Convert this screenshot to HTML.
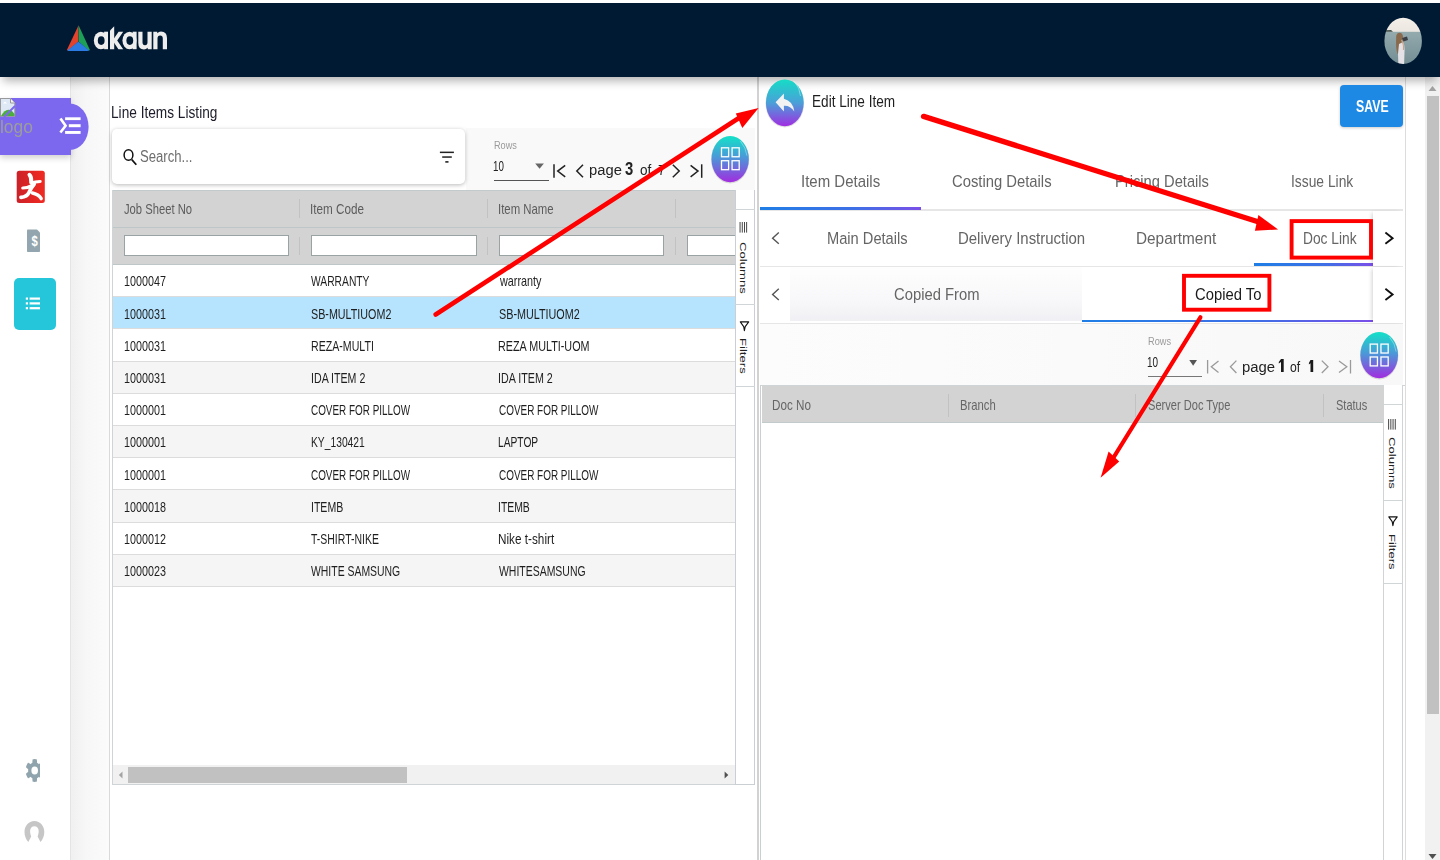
<!DOCTYPE html>
<html><head><meta charset="utf-8"><style>
html,body{margin:0;padding:0;width:1440px;height:860px;overflow:hidden;background:#fff}
body{position:relative;font-family:"Liberation Sans",sans-serif}
.t{position:absolute;white-space:nowrap;transform-origin:0 0}
</style></head><body>
<div style="position:absolute;left:0.00px;top:3.00px;width:1440.00px;height:74.00px;background:#001a33;box-shadow:0 7px 9px -3px rgba(0,0,0,.30);z-index:5"></div>
<svg style="position:absolute;left:60.00px;top:20.00px;width:40.00px;height:36.00px;overflow:visible;z-index:6" viewBox="60 20 40 36" preserveAspectRatio="none">
<path d="M78.6 25.2 L67.2 49.2 Q66.6 50.6 68.2 50.4 L78.4 41.6 Z" fill="#e3432c"/>
<path d="M78.6 25.2 L89.6 49.2 Q90.2 50.6 88.6 50.4 L78.6 41.6 Z" fill="#1d9f58"/>
<path d="M67.6 50.2 L78.4 41.4 L89.0 50.2 Q88.6 50.9 87.6 50.9 L68.6 50.9 Q67.4 50.9 67.6 50.2 Z" fill="#2b7be3"/>
</svg>
<svg style="position:absolute;left:90.00px;top:22.00px;width:80.00px;height:32.00px;overflow:visible;z-index:6" viewBox="90 22 80 32" preserveAspectRatio="none">
<g fill="#ededed">
<ellipse cx="100.9" cy="40.45" rx="7.05" ry="8.8"/><rect x="104.1" y="31.7" width="3.9" height="17.5"/>
<ellipse cx="129.5" cy="40.45" rx="7.05" ry="8.8"/><rect x="132.7" y="31.7" width="3.9" height="17.5"/>
<path d="M110 30.6 L114.2 26.2 L114.2 49.2 L110 49.2 Z"/>
<path d="M118.6 31.7 L123.2 31.7 L117.2 40.4 L123.2 49.2 L118.4 49.2 L112.6 40.4 Z"/>
<path d="M138.3 31.7 L142.5 31.7 L142.5 42.3 Q142.5 45.3 145 45.3 Q147.5 45.3 147.5 42.3 L147.5 31.7 L151.7 31.7 L151.7 49.2 L147.8 49.2 L147.6 47.7 Q146.2 49.5 144 49.5 Q138.3 49.5 138.3 43 Z"/>
<path d="M153.3 49.2 L157.5 49.2 L157.5 38.6 Q157.5 35.6 160.15 35.6 Q162.8 35.6 162.8 38.6 L162.8 49.2 L167 49.2 L167 38 Q167 31.4 161 31.4 Q158.8 31.4 157.4 33.2 L157.2 31.7 L153.3 31.7 Z"/>
</g>
<g fill="#001a33"><ellipse cx="101.2" cy="40.6" rx="3.4" ry="4.3"/><ellipse cx="129.8" cy="40.6" rx="3.4" ry="4.3"/></g>
</svg>
<svg style="position:absolute;left:1380.00px;top:14.00px;width:46.00px;height:54.00px;overflow:visible;z-index:6" viewBox="1380 14 46 54" preserveAspectRatio="none">
<defs><clipPath id="av"><ellipse cx="1403.15" cy="40.9" rx="18.75" ry="23.2"/></clipPath>
<linearGradient id="sea" x1="0" y1="0" x2="0" y2="1"><stop offset="0" stop-color="#a9bcbe"/><stop offset=".5" stop-color="#8aa2a6"/><stop offset="1" stop-color="#6f8a90"/></linearGradient>
<linearGradient id="sky" x1="0" y1="0" x2="0" y2="1"><stop offset="0" stop-color="#f6f2ec"/><stop offset="1" stop-color="#ebe6df"/></linearGradient>
<filter id="bl" x="-10%" y="-10%" width="120%" height="120%"><feGaussianBlur stdDeviation="0.45"/></filter></defs>
<g clip-path="url(#av)"><g filter="url(#bl)">
<rect x="1380" y="14" width="46" height="54" fill="url(#sea)"/>
<rect x="1380" y="14" width="46" height="17.8" fill="url(#sky)"/>
<path d="M1384 31.8 L1386 30.2 L1391 30 L1393 31.8 Z" fill="#3f4e48"/>
<path d="M1396.2 36 Q1397 32.5 1400 32.8 Q1403 33.5 1403 37 L1402.5 44 L1401 52 L1397.5 54 Q1395.5 48 1396.2 36 Z" fill="#8a6a4e"/>
<path d="M1399 44 L1403 42 Q1405 45 1404.5 52 L1404 68 L1398.5 68 L1398 54 Z" fill="#e4e2e6"/>
<path d="M1402 38 L1407 36.5 L1408 40 L1403.5 41.5 Z" fill="#3a3f44"/>
<path d="M1401.5 40 Q1404 44 1403.5 50" fill="none" stroke="#c9a58a" stroke-width="1.2"/>
</g></g></svg>
<div style="position:absolute;left:70.00px;top:77.00px;width:39.50px;height:783.00px;background:linear-gradient(to right,#f0f0f0,#f7f7f7 40%,#fbfbfb);border-left:1px solid #e4e4e4;border-right:1px solid #dadada;box-sizing:border-box"></div>
<div style="position:absolute;left:0.00px;top:98.00px;width:70.50px;height:57.00px;background:#7b68ee;box-shadow:0 3px 6px rgba(0,0,0,.18)"></div>
<svg style="position:absolute;left:40.00px;top:95.00px;width:60.00px;height:65.00px;overflow:visible;" viewBox="40 95 60 65" preserveAspectRatio="none"><ellipse cx="69.8" cy="126.8" rx="18.8" ry="23.3" fill="#7b68ee"/></svg>
<svg style="position:absolute;left:0.00px;top:98.00px;width:16.00px;height:19.00px;overflow:visible;" viewBox="0 98 16 19" preserveAspectRatio="none">
<path d="M0.5 98.5 L10.5 98.5 L14.8 103 L14.8 116.3 L0.5 116.3 Z" fill="#dfe8f5" stroke="#9a9a9a" stroke-width="1"/>
<path d="M10.5 98.5 L10.5 103 L14.8 103" fill="#f4f4f4" stroke="#9a9a9a" stroke-width="1"/>
<path d="M1 116 Q6 107 12 111 L14.5 114 L14.5 116 Z" fill="#4caf3c"/>
<path d="M3 103.5 L5 101.5 L7 103.5 Z" fill="#fff"/>
<path d="M4 117 L15 106" stroke="#7b68ee" stroke-width="2"/>
</svg>
<svg style="position:absolute;left:58.00px;top:114.00px;width:26.00px;height:23.00px;overflow:visible;" viewBox="58 114 26 23" preserveAspectRatio="none">
<path d="M61.2 119.6 L65.6 125.7 L61.2 131.4" fill="none" stroke="#fff" stroke-width="2.6" stroke-linecap="square"/>
<rect x="65.1" y="117.3" width="15.5" height="2.8" fill="#fff"/>
<rect x="68.8" y="124.2" width="11.8" height="3" fill="#fff"/>
<rect x="65.1" y="131" width="15.5" height="2.9" fill="#fff"/>
</svg>
<svg style="position:absolute;left:16.00px;top:170.00px;width:30.00px;height:34.00px;overflow:visible;" viewBox="16 170 30 34" preserveAspectRatio="none">
<defs><linearGradient id="rg" x1="0" x2="1"><stop offset="0" stop-color="#c9232a"/><stop offset=".5" stop-color="#e02424"/><stop offset="1" stop-color="#ef2b22"/></linearGradient></defs>
<rect x="16.7" y="170.8" width="28.1" height="32.1" rx="2.5" fill="url(#rg)"/>
<g fill="none" stroke="#fff" stroke-linecap="round" stroke-linejoin="round">
<path d="M29.5 174.8 Q31.6 177 31.2 182" stroke-width="4"/>
<path d="M31 183 Q35 181.6 40.2 181.4" stroke-width="3"/>
<path d="M22.8 188 Q28 188 33.5 185" stroke-width="3.2"/>
<path d="M34.2 184 Q30.5 188.5 29 192.5 Q27 196.8 21 197.4" stroke-width="3.8"/>
<path d="M32.4 193 Q38.5 194.2 41.2 198.6" stroke-width="3.4"/>
</g>
</svg>
<svg style="position:absolute;left:26.00px;top:228.00px;width:15.00px;height:25.00px;overflow:visible;" viewBox="26 228 15 25" preserveAspectRatio="none">
<path d="M27.8 229.5 L37 229.5 L40 232.5 L40 251.2 Q40 252 39.2 252 L27.8 252 Q27 252 27 251.2 L27 230.3 Q27 229.5 27.8 229.5 Z" fill="#93a5ae"/>
<text transform="translate(34.6 246.4) scale(0.82 1)" x="0" y="0" font-family="Liberation Sans" font-weight="700" font-size="13.8" fill="#fff" text-anchor="middle">$</text>
</svg>
<div style="position:absolute;left:14.00px;top:277.70px;width:42.20px;height:52.50px;background:#26c6da;border-radius:5px"></div>
<svg style="position:absolute;left:25.00px;top:296.00px;width:16.00px;height:15.00px;overflow:visible;" viewBox="25 296 16 15" preserveAspectRatio="none">
<rect x="25.8" y="297.5" width="2.2" height="2.2" fill="#fff"/>
<rect x="25.8" y="302.3" width="2.2" height="2.2" fill="#fff"/>
<rect x="25.8" y="307.1" width="2.2" height="2.2" fill="#fff"/>
<rect x="29.6" y="297.5" width="10.4" height="2.2" fill="#fff"/>
<rect x="29.6" y="302.3" width="10.4" height="2.2" fill="#fff"/>
<rect x="29.6" y="307.1" width="10.4" height="2.2" fill="#fff"/>
</svg>
<svg style="position:absolute;left:24.00px;top:757.00px;width:18.00px;height:27.00px;overflow:visible;" viewBox="24 757 18 27" preserveAspectRatio="none">
<path fill="#90a4ae" fill-rule="evenodd" d="M40.00 770.50 L40.00 770.36 L40.00 770.21 L40.00 770.07 L40.00 769.93 L40.00 769.79 L40.00 769.64 L40.00 769.50 L40.00 769.36 L40.00 769.22 L40.00 769.01 L40.00 768.78 L40.00 768.55 L40.00 768.30 L40.00 768.03 L40.00 767.76 L40.00 767.47 L40.00 767.17 L40.00 766.98 L40.00 766.79 L40.00 766.60 L40.00 766.41 L40.00 766.23 L40.00 766.05 L40.00 765.86 L40.00 765.68 L40.00 765.50 L40.00 765.32 L40.00 765.15 L40.00 764.97 L40.00 764.80 L40.00 764.63 L40.00 764.46 L40.00 764.29 L40.00 764.13 L40.00 763.96 L40.00 763.80 L40.00 763.64 L40.00 763.48 L40.00 763.33 L40.00 763.17 L40.00 763.02 L40.00 762.87 L40.00 762.73 L40.00 762.86 L40.00 763.00 L40.00 763.16 L40.00 763.33 L39.73 763.51 L39.42 763.71 L39.12 763.91 L38.83 764.13 L38.74 764.04 L38.65 763.95 L38.56 763.87 L38.46 763.78 L38.37 763.70 L38.27 763.62 L38.18 763.55 L38.08 763.47 L37.98 763.40 L37.88 763.33 L37.78 763.26 L37.68 763.19 L37.58 763.13 L37.47 763.07 L37.37 763.01 L37.26 762.95 L37.16 762.90 L37.05 762.84 L37.05 762.42 L37.04 761.99 L37.02 761.56 L36.99 761.13 L36.95 760.70 L36.89 760.26 L36.83 759.83 L36.75 759.39 L36.60 759.35 L36.44 759.31 L36.28 759.27 L36.13 759.24 L35.97 759.21 L35.81 759.18 L35.65 759.16 L35.49 759.14 L35.34 759.13 L35.18 759.12 L35.02 759.11 L34.86 759.10 L34.70 759.10 L34.54 759.10 L34.38 759.11 L34.22 759.12 L34.06 759.13 L33.91 759.14 L33.75 759.16 L33.59 759.18 L33.43 759.21 L33.27 759.24 L33.12 759.27 L32.96 759.31 L32.80 759.35 L32.65 759.39 L32.57 759.83 L32.51 760.26 L32.45 760.70 L32.41 761.13 L32.38 761.56 L32.36 761.99 L32.35 762.42 L32.35 762.84 L32.24 762.90 L32.14 762.95 L32.03 763.01 L31.93 763.07 L31.82 763.13 L31.72 763.19 L31.62 763.26 L31.52 763.33 L31.42 763.40 L31.32 763.47 L31.22 763.55 L31.13 763.62 L31.03 763.70 L30.94 763.78 L30.84 763.87 L30.75 763.95 L30.66 764.04 L30.57 764.13 L30.28 763.91 L29.98 763.71 L29.67 763.51 L29.35 763.33 L29.03 763.16 L28.70 763.00 L28.37 762.86 L28.03 762.73 L27.92 762.87 L27.82 763.02 L27.71 763.17 L27.61 763.33 L27.51 763.48 L27.42 763.64 L27.32 763.80 L27.23 763.96 L27.14 764.13 L27.05 764.29 L26.97 764.46 L26.88 764.63 L26.80 764.80 L26.72 764.97 L26.65 765.15 L26.57 765.32 L26.50 765.50 L26.43 765.68 L26.37 765.86 L26.30 766.05 L26.24 766.23 L26.19 766.41 L26.13 766.60 L26.08 766.79 L26.03 766.98 L25.98 767.17 L26.24 767.47 L26.51 767.76 L26.78 768.03 L27.06 768.30 L27.34 768.55 L27.63 768.78 L27.92 769.01 L28.22 769.22 L28.20 769.36 L28.19 769.50 L28.18 769.64 L28.16 769.79 L28.16 769.93 L28.15 770.07 L28.14 770.21 L28.14 770.36 L28.14 770.50 L28.14 770.64 L28.14 770.79 L28.15 770.93 L28.16 771.07 L28.16 771.21 L28.18 771.36 L28.19 771.50 L28.20 771.64 L28.22 771.78 L27.92 771.99 L27.63 772.22 L27.34 772.45 L27.06 772.70 L26.78 772.97 L26.51 773.24 L26.24 773.53 L25.98 773.83 L26.03 774.02 L26.08 774.21 L26.13 774.40 L26.19 774.59 L26.24 774.77 L26.30 774.95 L26.37 775.14 L26.43 775.32 L26.50 775.50 L26.57 775.68 L26.65 775.85 L26.72 776.03 L26.80 776.20 L26.88 776.37 L26.97 776.54 L27.05 776.71 L27.14 776.87 L27.23 777.04 L27.32 777.20 L27.42 777.36 L27.51 777.52 L27.61 777.67 L27.71 777.83 L27.82 777.98 L27.92 778.13 L28.03 778.27 L28.37 778.14 L28.70 778.00 L29.03 777.84 L29.35 777.67 L29.67 777.49 L29.98 777.29 L30.28 777.09 L30.57 776.87 L30.66 776.96 L30.75 777.05 L30.84 777.13 L30.94 777.22 L31.03 777.30 L31.13 777.38 L31.22 777.45 L31.32 777.53 L31.42 777.60 L31.52 777.67 L31.62 777.74 L31.72 777.81 L31.82 777.87 L31.93 777.93 L32.03 777.99 L32.14 778.05 L32.24 778.10 L32.35 778.16 L32.35 778.58 L32.36 779.01 L32.38 779.44 L32.41 779.87 L32.45 780.30 L32.51 780.74 L32.57 781.17 L32.65 781.61 L32.80 781.65 L32.96 781.69 L33.12 781.73 L33.27 781.76 L33.43 781.79 L33.59 781.82 L33.75 781.84 L33.91 781.86 L34.06 781.87 L34.22 781.88 L34.38 781.89 L34.54 781.90 L34.70 781.90 L34.86 781.90 L35.02 781.89 L35.18 781.88 L35.34 781.87 L35.49 781.86 L35.65 781.84 L35.81 781.82 L35.97 781.79 L36.13 781.76 L36.28 781.73 L36.44 781.69 L36.60 781.65 L36.75 781.61 L36.83 781.17 L36.89 780.74 L36.95 780.30 L36.99 779.87 L37.02 779.44 L37.04 779.01 L37.05 778.58 L37.05 778.16 L37.16 778.10 L37.26 778.05 L37.37 777.99 L37.47 777.93 L37.58 777.87 L37.68 777.81 L37.78 777.74 L37.88 777.67 L37.98 777.60 L38.08 777.53 L38.18 777.45 L38.27 777.38 L38.37 777.30 L38.46 777.22 L38.56 777.13 L38.65 777.05 L38.74 776.96 L38.83 776.87 L39.12 777.09 L39.42 777.29 L39.73 777.49 L40.00 777.67 L40.00 777.84 L40.00 778.00 L40.00 778.14 L40.00 778.27 L40.00 778.13 L40.00 777.98 L40.00 777.83 L40.00 777.67 L40.00 777.52 L40.00 777.36 L40.00 777.20 L40.00 777.04 L40.00 776.87 L40.00 776.71 L40.00 776.54 L40.00 776.37 L40.00 776.20 L40.00 776.03 L40.00 775.85 L40.00 775.68 L40.00 775.50 L40.00 775.32 L40.00 775.14 L40.00 774.95 L40.00 774.77 L40.00 774.59 L40.00 774.40 L40.00 774.21 L40.00 774.02 L40.00 773.83 L40.00 773.53 L40.00 773.24 L40.00 772.97 L40.00 772.70 L40.00 772.45 L40.00 772.22 L40.00 771.99 L40.00 771.78 L40.00 771.64 L40.00 771.50 L40.00 771.36 L40.00 771.21 L40.00 771.07 L40.00 770.93 L40.00 770.79 L40.00 770.64 Z M38.00 770.5 A3.3 4 0 1 0 31.40 770.5 A3.3 4 0 1 0 38.00 770.5 Z"/>
</svg>
<svg style="position:absolute;left:23.00px;top:819.00px;width:23.00px;height:25.00px;overflow:visible;" viewBox="23 819 23 25" preserveAspectRatio="none">
<path fill="#c6c6c6" d="M34.4 821 C28.5 821 24.5 826 24.5 832 C24.5 836 26 839.5 28.3 842 L31.2 836.5 C30.4 834.5 30.1 832.5 30.1 831 C30.1 828 32 826.2 34.4 826.2 C36.8 826.2 38.7 828 38.7 831 C38.7 832.5 38.4 834.5 37.6 836.5 L40.5 842 C42.8 839.5 44.3 836 44.3 832 C44.3 826 40.3 821 34.4 821 Z"/>
</svg>
<div style="position:absolute;left:466.00px;top:128.00px;width:289.00px;height:61.60px;background:#f9f9f9"></div>
<div style="position:absolute;left:112.20px;top:128.70px;width:353.00px;height:55.30px;background:#fff;border-radius:5px;box-shadow:0 1px 4px rgba(0,0,0,.28)"></div>
<svg style="position:absolute;left:120.00px;top:146.00px;width:20.00px;height:22.00px;overflow:visible;" viewBox="120 146 20 22" preserveAspectRatio="none">
<ellipse cx="128.5" cy="155" rx="4.4" ry="5.3" fill="none" stroke="#111" stroke-width="1.5"/>
<path d="M131.8 159.6 L136.3 164.8" stroke="#111" stroke-width="1.7"/>
</svg>
<svg style="position:absolute;left:438.00px;top:150.00px;width:18.00px;height:15.00px;overflow:visible;" viewBox="438 150 18 15" preserveAspectRatio="none">
<rect x="439.9" y="151.6" width="14" height="1.5" fill="#222"/>
<rect x="442.2" y="156.3" width="9.6" height="1.5" fill="#222"/>
<rect x="445.3" y="161.1" width="3.2" height="1.6" fill="#222"/>
</svg>
<svg style="position:absolute;left:533.00px;top:161.00px;width:13.00px;height:9.00px;overflow:visible;" viewBox="533 161 13 9" preserveAspectRatio="none"><path d="M535.2 163.4 L543.9 163.4 L539.55 168.7 Z" fill="#666"/></svg>
<div style="position:absolute;left:494.00px;top:180.00px;width:54.50px;height:1.20px;background:#555"></div>
<svg style="position:absolute;left:550.00px;top:160.00px;width:160.00px;height:22.00px;overflow:visible;" viewBox="550 160 160 22" preserveAspectRatio="none"><path d="M554.0 164.3 L554.0 177.8" stroke="#222" stroke-width="1.5"/><path d="M565.2 165.3 L557.7 171.05 L565.2 176.8" fill="none" stroke="#222" stroke-width="1.5"/><path d="M583 164.8 L576.8 171.05 L583 177.3" fill="none" stroke="#222" stroke-width="1.5"/><path d="M672.8 164.8 L679.2 171.05 L672.8 177.3" fill="none" stroke="#222" stroke-width="1.5"/><path d="M701.7 164.3 L701.7 177.8" stroke="#222" stroke-width="1.5"/><path d="M690.6 165.3 L698.0 171.05 L690.6 176.8" fill="none" stroke="#222" stroke-width="1.5"/></svg>
<svg style="position:absolute;left:705.00px;top:130.00px;width:50.00px;height:58.00px;overflow:visible;" viewBox="705 130 50 58" preserveAspectRatio="none"><defs><linearGradient id="g711" x1="0" y1="0" x2="0" y2="1"><stop offset="0" stop-color="#12e2c8"/><stop offset=".45" stop-color="#4a9ad8"/><stop offset="1" stop-color="#a22ce0"/></linearGradient></defs>
<ellipse cx="730.15" cy="159.75" rx="19.049999999999976" ry="23.750000000000007" fill="rgba(0,0,0,.12)"/>
<ellipse cx="730.15" cy="159.15" rx="18.649999999999977" ry="23.150000000000006" fill="url(#g711)"/>
<path d="M740.4074999999999 141.093 Q746.0024999999999 147.575 746.935 155.6775" fill="none" stroke="rgba(255,255,255,.45)" stroke-width="0.8"/>
<rect x="721.5" y="147.79999999999998" width="7.11599999999999" height="8.964000000000011" fill="none" stroke="#fff" stroke-width="1.3"/><rect x="732.084" y="147.79999999999998" width="7.11599999999999" height="8.964000000000011" fill="none" stroke="#fff" stroke-width="1.3"/><rect x="721.5" y="160.736" width="7.11599999999999" height="8.964000000000011" fill="none" stroke="#fff" stroke-width="1.3"/><rect x="732.084" y="160.736" width="7.11599999999999" height="8.964000000000011" fill="none" stroke="#fff" stroke-width="1.3"/></svg>
<div style="position:absolute;left:112.00px;top:189.60px;width:643.00px;height:595.40px;background:#fff;border:1px solid #cfd4d6;box-sizing:border-box"></div>
<div style="position:absolute;left:113.00px;top:190.00px;width:622.00px;height:74.50px;background:#d3d3d3;border-top:1px solid #c3cacc;box-sizing:border-box"></div>
<div style="position:absolute;left:113.00px;top:226.50px;width:622.00px;height:1.00px;background:#bfc6c8"></div>
<div style="position:absolute;left:113.00px;top:264.00px;width:622.00px;height:1.00px;background:#bfc6c8"></div>
<div style="position:absolute;left:298.80px;top:199.00px;width:1.00px;height:19.00px;background:#c2c2c2"></div>
<div style="position:absolute;left:298.80px;top:237.00px;width:1.00px;height:18.00px;background:#c2c2c2"></div>
<div style="position:absolute;left:486.60px;top:199.00px;width:1.00px;height:19.00px;background:#c2c2c2"></div>
<div style="position:absolute;left:486.60px;top:237.00px;width:1.00px;height:18.00px;background:#c2c2c2"></div>
<div style="position:absolute;left:674.60px;top:199.00px;width:1.00px;height:19.00px;background:#c2c2c2"></div>
<div style="position:absolute;left:674.60px;top:237.00px;width:1.00px;height:18.00px;background:#c2c2c2"></div>
<div style="position:absolute;left:124.10px;top:235.40px;width:164.50px;height:20.20px;background:#fff;border:1px solid #9aa3a3;box-sizing:border-box"></div>
<div style="position:absolute;left:311.30px;top:235.40px;width:165.30px;height:20.20px;background:#fff;border:1px solid #9aa3a3;box-sizing:border-box"></div>
<div style="position:absolute;left:499.00px;top:235.40px;width:165.30px;height:20.20px;background:#fff;border:1px solid #9aa3a3;box-sizing:border-box"></div>
<div style="position:absolute;left:686.90px;top:235.40px;width:48.10px;height:20.20px;background:#fff;border:1px solid #9aa3a3;box-sizing:border-box;border-right:none"></div>
<div style="position:absolute;left:113.00px;top:265.00px;width:622.00px;height:31.71px;background:#fff"></div>
<div style="position:absolute;left:113.00px;top:296.21px;width:622.00px;height:1.00px;background:#dcdcdc"></div>
<div style="position:absolute;left:113.00px;top:297.21px;width:622.00px;height:31.71px;background:#b6e4fe"></div>
<div style="position:absolute;left:113.00px;top:328.42px;width:622.00px;height:1.00px;background:#dcdcdc"></div>
<div style="position:absolute;left:113.00px;top:329.42px;width:622.00px;height:31.71px;background:#fff"></div>
<div style="position:absolute;left:113.00px;top:360.63px;width:622.00px;height:1.00px;background:#dcdcdc"></div>
<div style="position:absolute;left:113.00px;top:361.63px;width:622.00px;height:31.71px;background:#f5f5f5"></div>
<div style="position:absolute;left:113.00px;top:392.84px;width:622.00px;height:1.00px;background:#dcdcdc"></div>
<div style="position:absolute;left:113.00px;top:393.84px;width:622.00px;height:31.71px;background:#fff"></div>
<div style="position:absolute;left:113.00px;top:425.05px;width:622.00px;height:1.00px;background:#dcdcdc"></div>
<div style="position:absolute;left:113.00px;top:426.05px;width:622.00px;height:31.71px;background:#f5f5f5"></div>
<div style="position:absolute;left:113.00px;top:457.26px;width:622.00px;height:1.00px;background:#dcdcdc"></div>
<div style="position:absolute;left:113.00px;top:458.26px;width:622.00px;height:31.71px;background:#fff"></div>
<div style="position:absolute;left:113.00px;top:489.47px;width:622.00px;height:1.00px;background:#dcdcdc"></div>
<div style="position:absolute;left:113.00px;top:490.47px;width:622.00px;height:31.71px;background:#f5f5f5"></div>
<div style="position:absolute;left:113.00px;top:521.68px;width:622.00px;height:1.00px;background:#dcdcdc"></div>
<div style="position:absolute;left:113.00px;top:522.68px;width:622.00px;height:31.71px;background:#fff"></div>
<div style="position:absolute;left:113.00px;top:553.89px;width:622.00px;height:1.00px;background:#dcdcdc"></div>
<div style="position:absolute;left:113.00px;top:554.89px;width:622.00px;height:31.71px;background:#f5f5f5"></div>
<div style="position:absolute;left:113.00px;top:586.10px;width:622.00px;height:1.00px;background:#dcdcdc"></div>
<div style="position:absolute;left:734.50px;top:189.60px;width:20.50px;height:595.90px;background:#fff;border:1px solid #c9cfd3;border-top:none;box-sizing:border-box"></div>
<div style="position:absolute;left:735.00px;top:208.80px;width:20.00px;height:1.00px;background:#d0d5d7"></div>
<div style="position:absolute;left:735.00px;top:304.20px;width:20.00px;height:1.00px;background:#d0d5d7"></div>
<div style="position:absolute;left:735.00px;top:385.50px;width:20.00px;height:1.00px;background:#d0d5d7"></div>
<svg style="position:absolute;left:737.00px;top:220.00px;width:15.00px;height:14.00px;overflow:visible;" viewBox="737 220 15 14" preserveAspectRatio="none"><rect x="739.6" y="222" width="0.9" height="10.6" fill="#333"/><rect x="741.8000000000001" y="222" width="0.9" height="10.6" fill="#333"/><rect x="744.0" y="222" width="0.9" height="10.6" fill="#333"/><rect x="746.2" y="222" width="0.9" height="10.6" fill="#333"/></svg>
<svg style="position:absolute;left:737.00px;top:318.00px;width:15.00px;height:15.00px;overflow:visible;" viewBox="737 318 15 15" preserveAspectRatio="none"><path transform="translate(0 0)" d="M740.3 321.9 L748.7 321.9 L745.2 326.6 L744.4 330.6 L743.7 326.6 Z" fill="none" stroke="#111" stroke-width="1.1" stroke-linejoin="round"/></svg>
<div style="position:absolute;left:113.00px;top:765.30px;width:622.00px;height:18.70px;background:#f1f1f1"></div>
<div style="position:absolute;left:128.30px;top:767.40px;width:279.00px;height:15.30px;background:#c1c1c1"></div>
<svg style="position:absolute;left:116.00px;top:770.00px;width:8.00px;height:10.00px;overflow:visible;" viewBox="116 770 8 10" preserveAspectRatio="none"><path d="M122.5 771.5 L118.8 775 L122.5 778.5 Z" fill="#a3a3a3"/></svg>
<svg style="position:absolute;left:722.00px;top:770.00px;width:10.00px;height:10.00px;overflow:visible;" viewBox="722 770 10 10" preserveAspectRatio="none"><path d="M724.6 771.5 L728.3 775 L724.6 778.5 Z" fill="#505050"/></svg>
<div style="position:absolute;left:756.90px;top:77.00px;width:2.10px;height:783.00px;background:#d2d2d2"></div>
<div style="position:absolute;left:1405.00px;top:77.00px;width:1.00px;height:783.00px;background:#dcdcdc"></div>
<svg style="position:absolute;left:760.00px;top:74.00px;width:50.00px;height:58.00px;overflow:visible;z-index:6" viewBox="760 74 50 58" preserveAspectRatio="none">
<defs><linearGradient id="bk" x1="0" y1="0" x2="0" y2="1"><stop offset="0" stop-color="#16dcc6"/><stop offset=".5" stop-color="#4aa0d8"/><stop offset="1" stop-color="#a02ee2"/></linearGradient></defs>
<ellipse cx="784.8" cy="103.6" rx="19.3" ry="23.8" fill="rgba(0,0,0,.12)"/>
<ellipse cx="784.8" cy="102.85" rx="18.9" ry="23.35" fill="url(#bk)"/>
<path d="M794 81 Q800 88 800.5 96" fill="none" stroke="rgba(255,255,255,.5)" stroke-width="0.8"/>
<path d="M783.9 93.4 L775.6 102.2 L783.9 111.6 L783.9 105.8 Q790 105.2 794.3 111.6 Q793 101 783.9 98.8 Z" fill="#f2f2f2"/>
</svg>
<div style="position:absolute;left:1340.00px;top:84.75px;width:63.20px;height:42.25px;background:#1e88e5;border-radius:4px;box-shadow:0 1px 3px rgba(0,0,0,.2);z-index:6"></div>
<div style="position:absolute;left:1425.20px;top:77.00px;width:14.80px;height:783.00px;background:#f1f1f1"></div>
<div style="position:absolute;left:1426.80px;top:96.40px;width:12.00px;height:618.10px;background:#c1c1c1"></div>
<svg style="position:absolute;left:1426.00px;top:82.00px;width:14.00px;height:13.00px;overflow:visible;" viewBox="1426 82 14 13" preserveAspectRatio="none"><path d="M1428.5 91 L1432.5 86 L1436.5 91 Z" fill="#a3a3a3"/></svg>
<svg style="position:absolute;left:1426.00px;top:850.00px;width:14.00px;height:10.00px;overflow:visible;" viewBox="1426 850 14 10" preserveAspectRatio="none"><path d="M1428.5 854 L1436.5 854 L1432.5 859 Z" fill="#505050"/></svg>
<div style="position:absolute;left:760.00px;top:209.40px;width:643.00px;height:1.60px;background:#e6e6e6"></div>
<div style="position:absolute;left:760.00px;top:206.90px;width:160.70px;height:2.70px;background:linear-gradient(to right,#1f7ee6,#3f6fe6 60%,#7a4fe8)"></div>
<div style="position:absolute;left:760.00px;top:265.80px;width:643.00px;height:1.20px;background:#e6e6e6"></div>
<div style="position:absolute;left:1254.20px;top:263.40px;width:118.70px;height:2.60px;background:linear-gradient(to right,#1f7ee6,#3f6fe6 60%,#7a4fe8)"></div>
<svg style="position:absolute;left:768.00px;top:228.00px;width:16.00px;height:20.00px;overflow:visible;" viewBox="768 228 16 20" preserveAspectRatio="none"><path d="M778.8 232.6 L772.6 238.2 L778.8 243.8" fill="none" stroke="#555" stroke-width="1.4"/></svg>
<div style="position:absolute;left:1373.00px;top:211.00px;width:30.00px;height:55.00px;background:#fff;box-shadow:-3px 0 4px -2px rgba(0,0,0,.18)"></div>
<svg style="position:absolute;left:1380.00px;top:228.00px;width:20.00px;height:20.00px;overflow:visible;" viewBox="1380 228 20 20" preserveAspectRatio="none"><path d="M1385.4 232.6 L1392.6 238.2 L1385.4 243.8" fill="none" stroke="#111" stroke-width="1.9"/></svg>
<div style="position:absolute;left:760.00px;top:322.80px;width:643.00px;height:1.20px;background:#e6e6e6"></div>
<div style="position:absolute;left:789.80px;top:267.00px;width:291.80px;height:54.40px;background:linear-gradient(to bottom,#fefefe,#f8f8fa 60%,#f0f0f4)"></div>
<div style="position:absolute;left:1082.00px;top:319.60px;width:290.90px;height:2.40px;background:linear-gradient(to right,#1f7ee6,#3f6fe6 60%,#7a4fe8)"></div>
<svg style="position:absolute;left:768.00px;top:284.00px;width:16.00px;height:20.00px;overflow:visible;" viewBox="768 284 16 20" preserveAspectRatio="none"><path d="M778.8 288.8 L772.6 294.4 L778.8 300" fill="none" stroke="#555" stroke-width="1.4"/></svg>
<div style="position:absolute;left:1373.00px;top:267.00px;width:30.00px;height:55.80px;background:#fff;box-shadow:-3px 0 4px -2px rgba(0,0,0,.18)"></div>
<svg style="position:absolute;left:1380.00px;top:284.00px;width:20.00px;height:20.00px;overflow:visible;" viewBox="1380 284 20 20" preserveAspectRatio="none"><path d="M1385.4 288.8 L1392.6 294.4 L1385.4 300" fill="none" stroke="#111" stroke-width="1.9"/></svg>
<div style="position:absolute;left:760.00px;top:324.00px;width:643.00px;height:61.10px;background:linear-gradient(to right,#fcfcfc,#f8f8f8)"></div>
<svg style="position:absolute;left:1186.00px;top:357.00px;width:14.00px;height:11.00px;overflow:visible;" viewBox="1186 357 14 11" preserveAspectRatio="none"><path d="M1189.3 359.9 L1197 359.9 L1193.15 365.7 Z" fill="#555"/></svg>
<div style="position:absolute;left:1147.50px;top:376.00px;width:54.50px;height:1.10px;background:#777"></div>
<svg style="position:absolute;left:1200.00px;top:355.00px;width:156.00px;height:23.00px;overflow:visible;" viewBox="1200 355 156 23" preserveAspectRatio="none"><path d="M1207.6 360 L1207.6 373.5" stroke="#9a9a9a" stroke-width="1.3"/><path d="M1218.5 361 L1211.3 366.75 L1218.5 372.5" fill="none" stroke="#9a9a9a" stroke-width="1.3"/><path d="M1236.4 360.6 L1230.4 366.8 L1236.4 373" fill="none" stroke="#9a9a9a" stroke-width="1.3"/><path d="M1321.8 360.6 L1328 366.8 L1321.8 373" fill="none" stroke="#9a9a9a" stroke-width="1.3"/><path d="M1350.5 360 L1350.5 373.5" stroke="#9a9a9a" stroke-width="1.3"/><path d="M1339 361 L1346.8 366.75 L1339 372.5" fill="none" stroke="#9a9a9a" stroke-width="1.3"/></svg>
<svg style="position:absolute;left:1276.00px;top:356.00px;width:40.00px;height:18.00px;overflow:visible;" viewBox="1276 356 40 18" preserveAspectRatio="none"><path d="M1278.8 361.9 L1281.0 358.9 L1283.7 358.9 L1283.7 372.1 L1281.0 372.1 L1281.0 362.09999999999997 L1278.8 363.5 Z" fill="#1a1a1a"/><path d="M1308.9 363 L1310.5 360 L1313.2 360 L1313.2 372.1 L1310.5 372.1 L1310.5 363.2 L1308.9 364.6 Z" fill="#1a1a1a"/></svg>
<svg style="position:absolute;left:1355.00px;top:326.00px;width:48.00px;height:58.00px;overflow:visible;" viewBox="1355 326 48 58" preserveAspectRatio="none"><defs><linearGradient id="g1360" x1="0" y1="0" x2="0" y2="1"><stop offset="0" stop-color="#12e2c8"/><stop offset=".45" stop-color="#4a9ad8"/><stop offset="1" stop-color="#a22ce0"/></linearGradient></defs>
<ellipse cx="1379.2" cy="355.75" rx="19.199999999999953" ry="23.750000000000007" fill="rgba(0,0,0,.12)"/>
<ellipse cx="1379.2" cy="355.15" rx="18.799999999999955" ry="23.150000000000006" fill="url(#g1360)"/>
<path d="M1389.54 337.09299999999996 Q1395.18 343.575 1396.12 351.67749999999995" fill="none" stroke="rgba(255,255,255,.45)" stroke-width="0.8"/>
<rect x="1370.1999999999998" y="344.1" width="7.24800000000002" height="8.92" fill="none" stroke="#fff" stroke-width="1.3"/><rect x="1380.9519999999998" y="344.1" width="7.24800000000002" height="8.92" fill="none" stroke="#fff" stroke-width="1.3"/><rect x="1370.1999999999998" y="356.98" width="7.24800000000002" height="8.92" fill="none" stroke="#fff" stroke-width="1.3"/><rect x="1380.9519999999998" y="356.98" width="7.24800000000002" height="8.92" fill="none" stroke="#fff" stroke-width="1.3"/></svg>
<div style="position:absolute;left:760.00px;top:385.10px;width:645.00px;height:474.90px;background:#fff;border-left:1px solid #c9cfd3;border-top:1px solid #cfd4d6;box-sizing:border-box"></div>
<div style="position:absolute;left:762.00px;top:386.00px;width:621.60px;height:36.50px;background:#d3d3d3"></div>
<div style="position:absolute;left:762.00px;top:422.00px;width:621.60px;height:1.40px;background:#c3cacc"></div>
<div style="position:absolute;left:948.10px;top:394.00px;width:1.00px;height:23.00px;background:#c2c2c2"></div>
<div style="position:absolute;left:1135.30px;top:394.00px;width:1.00px;height:23.00px;background:#c2c2c2"></div>
<div style="position:absolute;left:1323.00px;top:394.00px;width:1.00px;height:23.00px;background:#c2c2c2"></div>
<div style="position:absolute;left:1383.10px;top:385.10px;width:19.80px;height:474.90px;background:#fff;border-left:1px solid #cfd4d6;border-right:1px solid #cfd4d6;box-sizing:border-box"></div>
<div style="position:absolute;left:1383.60px;top:404.10px;width:19.00px;height:1.00px;background:#d0d5d7"></div>
<div style="position:absolute;left:1383.60px;top:500.00px;width:19.00px;height:1.00px;background:#d0d5d7"></div>
<div style="position:absolute;left:1383.60px;top:582.50px;width:19.00px;height:1.00px;background:#d0d5d7"></div>
<svg style="position:absolute;left:1385.00px;top:416.00px;width:16.00px;height:14.00px;overflow:visible;" viewBox="1385 416 16 14" preserveAspectRatio="none"><rect x="1388.2" y="419" width="0.9" height="10.6" fill="#333"/><rect x="1390.4" y="419" width="0.9" height="10.6" fill="#333"/><rect x="1392.6000000000001" y="419" width="0.9" height="10.6" fill="#333"/><rect x="1394.8" y="419" width="0.9" height="10.6" fill="#333"/></svg>
<svg style="position:absolute;left:1385.00px;top:513.00px;width:16.00px;height:15.00px;overflow:visible;" viewBox="1385 513 16 15" preserveAspectRatio="none"><path transform="translate(648.5 195.0)" d="M740.3 321.9 L748.7 321.9 L745.2 326.6 L744.4 330.6 L743.7 326.6 Z" fill="none" stroke="#111" stroke-width="1.1" stroke-linejoin="round"/></svg>
<svg style="position:absolute;left:0;top:0;width:1440px;height:860px;z-index:20" viewBox="0 0 1440 860">
<line x1="435.7" y1="314.5" x2="742" y2="116" stroke="#ff0000" stroke-width="4.6" stroke-linecap="round"/>
<path d="M758.6 107.9 L735.8 113.5 L742.3 127.9 Z" fill="#ff0000"/>
<line x1="923.6" y1="116.4" x2="1262" y2="223" stroke="#ff0000" stroke-width="5.4" stroke-linecap="round"/>
<path d="M1278.1 229.5 L1258.4 214.9 L1254.9 230.7 Z" fill="#ff0000"/>
<rect x="1291.6" y="221.1" width="79.4" height="36.5" fill="none" stroke="#ff0000" stroke-width="3.9"/>
<rect x="1184" y="275.8" width="85.4" height="33.9" fill="none" stroke="#ff0000" stroke-width="3.9"/>
<line x1="1200.4" y1="317.3" x2="1112" y2="460" stroke="#ff0000" stroke-width="4.2" stroke-linecap="round"/>
<path d="M1100.6 477.8 L1108.6 451.4 L1119.2 461.4 Z" fill="#ff0000"/>
</svg>
<div class="t" style="left:-0.37px;top:117.66px;font-size:18px;line-height:18px;color:#9c9c9c;font-weight:400;transform:scaleX(0.9661);">logo</div>
<div class="t" style="left:111.40px;top:104.01px;font-size:17px;line-height:17px;color:#1c1c2a;font-weight:400;transform:scaleX(0.8041);">Line Items Listing</div>
<div class="t" style="left:140.00px;top:149.06px;font-size:16px;line-height:16px;color:#6e6e6e;font-weight:400;transform:scaleX(0.8197);">Search...</div>
<div class="t" style="left:494.00px;top:139.93px;font-size:11.3px;line-height:11.3px;color:#9a9a9a;font-weight:400;transform:scaleX(0.8112);">Rows</div>
<div class="t" style="left:493.37px;top:158.28px;font-size:15.5px;line-height:15.5px;color:#222;font-weight:400;transform:scaleX(0.6318);">10</div>
<div class="t" style="left:588.85px;top:162.38px;font-size:15.5px;line-height:15.5px;color:#222;font-weight:400;transform:scaleX(0.9525);">page</div>
<div class="t" style="left:625.00px;top:159.84px;font-size:18.5px;line-height:18.5px;color:#222;font-weight:700;transform:scaleX(0.8000);">3</div>
<div class="t" style="left:639.80px;top:162.38px;font-size:15.5px;line-height:15.5px;color:#222;font-weight:400;transform:scaleX(0.8737);">of</div>
<div class="t" style="left:657.70px;top:162.38px;font-size:15.5px;line-height:15.5px;color:#222;font-weight:400;transform:scaleX(0.8375);">7</div>
<div class="t" style="left:124.10px;top:201.71px;font-size:14.4px;line-height:14.4px;color:#5c5c5c;font-weight:400;transform:scaleX(0.7798);">Job Sheet No</div>
<div class="t" style="left:310.49px;top:201.71px;font-size:14.4px;line-height:14.4px;color:#5c5c5c;font-weight:400;transform:scaleX(0.8136);">Item Code</div>
<div class="t" style="left:498.21px;top:201.71px;font-size:14.4px;line-height:14.4px;color:#5c5c5c;font-weight:400;transform:scaleX(0.7900);">Item Name</div>
<div class="t" style="left:124.15px;top:274.40px;font-size:14.3px;line-height:14.3px;color:#1e1e1e;font-weight:400;transform:scaleX(0.7531);">1000047</div>
<div class="t" style="left:311.40px;top:274.40px;font-size:14.3px;line-height:14.3px;color:#1e1e1e;font-weight:400;transform:scaleX(0.7193);">WARRANTY</div>
<div class="t" style="left:499.86px;top:274.40px;font-size:14.3px;line-height:14.3px;color:#1e1e1e;font-weight:400;transform:scaleX(0.7570);">warranty</div>
<div class="t" style="left:124.15px;top:306.61px;font-size:14.3px;line-height:14.3px;color:#1e1e1e;font-weight:400;transform:scaleX(0.7531);">1000031</div>
<div class="t" style="left:311.40px;top:306.61px;font-size:14.3px;line-height:14.3px;color:#1e1e1e;font-weight:400;transform:scaleX(0.7513);">SB-MULTIUOM2</div>
<div class="t" style="left:499.10px;top:306.61px;font-size:14.3px;line-height:14.3px;color:#1e1e1e;font-weight:400;transform:scaleX(0.7550);">SB-MULTIUOM2</div>
<div class="t" style="left:124.15px;top:338.82px;font-size:14.3px;line-height:14.3px;color:#1e1e1e;font-weight:400;transform:scaleX(0.7531);">1000031</div>
<div class="t" style="left:310.66px;top:338.82px;font-size:14.3px;line-height:14.3px;color:#1e1e1e;font-weight:400;transform:scaleX(0.7420);">REZA-MULTI</div>
<div class="t" style="left:498.35px;top:338.82px;font-size:14.3px;line-height:14.3px;color:#1e1e1e;font-weight:400;transform:scaleX(0.7550);">REZA MULTI-UOM</div>
<div class="t" style="left:124.15px;top:371.03px;font-size:14.3px;line-height:14.3px;color:#1e1e1e;font-weight:400;transform:scaleX(0.7531);">1000031</div>
<div class="t" style="left:310.66px;top:371.03px;font-size:14.3px;line-height:14.3px;color:#1e1e1e;font-weight:400;transform:scaleX(0.7432);">IDA ITEM 2</div>
<div class="t" style="left:498.35px;top:371.03px;font-size:14.3px;line-height:14.3px;color:#1e1e1e;font-weight:400;transform:scaleX(0.7487);">IDA ITEM 2</div>
<div class="t" style="left:124.15px;top:403.24px;font-size:14.3px;line-height:14.3px;color:#1e1e1e;font-weight:400;transform:scaleX(0.7531);">1000001</div>
<div class="t" style="left:311.40px;top:403.24px;font-size:14.3px;line-height:14.3px;color:#1e1e1e;font-weight:400;transform:scaleX(0.6927);">COVER FOR PILLOW</div>
<div class="t" style="left:499.10px;top:403.24px;font-size:14.3px;line-height:14.3px;color:#1e1e1e;font-weight:400;transform:scaleX(0.6955);">COVER FOR PILLOW</div>
<div class="t" style="left:124.15px;top:435.45px;font-size:14.3px;line-height:14.3px;color:#1e1e1e;font-weight:400;transform:scaleX(0.7531);">1000001</div>
<div class="t" style="left:310.68px;top:435.45px;font-size:14.3px;line-height:14.3px;color:#1e1e1e;font-weight:400;transform:scaleX(0.7197);">KY_130421</div>
<div class="t" style="left:498.38px;top:435.45px;font-size:14.3px;line-height:14.3px;color:#1e1e1e;font-weight:400;transform:scaleX(0.7159);">LAPTOP</div>
<div class="t" style="left:124.15px;top:467.66px;font-size:14.3px;line-height:14.3px;color:#1e1e1e;font-weight:400;transform:scaleX(0.7531);">1000001</div>
<div class="t" style="left:311.40px;top:467.66px;font-size:14.3px;line-height:14.3px;color:#1e1e1e;font-weight:400;transform:scaleX(0.6927);">COVER FOR PILLOW</div>
<div class="t" style="left:499.10px;top:467.66px;font-size:14.3px;line-height:14.3px;color:#1e1e1e;font-weight:400;transform:scaleX(0.6955);">COVER FOR PILLOW</div>
<div class="t" style="left:124.15px;top:499.87px;font-size:14.3px;line-height:14.3px;color:#1e1e1e;font-weight:400;transform:scaleX(0.7531);">1000018</div>
<div class="t" style="left:310.66px;top:499.87px;font-size:14.3px;line-height:14.3px;color:#1e1e1e;font-weight:400;transform:scaleX(0.7378);">ITEMB</div>
<div class="t" style="left:498.37px;top:499.87px;font-size:14.3px;line-height:14.3px;color:#1e1e1e;font-weight:400;transform:scaleX(0.7283);">ITEMB</div>
<div class="t" style="left:124.15px;top:532.08px;font-size:14.3px;line-height:14.3px;color:#1e1e1e;font-weight:400;transform:scaleX(0.7531);">1000012</div>
<div class="t" style="left:311.40px;top:532.08px;font-size:14.3px;line-height:14.3px;color:#1e1e1e;font-weight:400;transform:scaleX(0.7326);">T-SHIRT-NIKE</div>
<div class="t" style="left:498.28px;top:532.08px;font-size:14.3px;line-height:14.3px;color:#1e1e1e;font-weight:400;transform:scaleX(0.8227);">Nike t-shirt</div>
<div class="t" style="left:124.15px;top:564.29px;font-size:14.3px;line-height:14.3px;color:#1e1e1e;font-weight:400;transform:scaleX(0.7531);">1000023</div>
<div class="t" style="left:311.40px;top:564.29px;font-size:14.3px;line-height:14.3px;color:#1e1e1e;font-weight:400;transform:scaleX(0.7291);">WHITE SAMSUNG</div>
<div class="t" style="left:499.10px;top:564.29px;font-size:14.3px;line-height:14.3px;color:#1e1e1e;font-weight:400;transform:scaleX(0.7316);">WHITESAMSUNG</div>
<div class="t" style="left:811.75px;top:93.66px;font-size:16px;line-height:16px;color:#1e1e1e;font-weight:400;transform:scaleX(0.8497);">Edit Line Item</div>
<div class="t" style="left:1355.80px;top:97.71px;font-size:17px;line-height:17px;color:#fff;font-weight:700;transform:scaleX(0.7249);z-index:7">SAVE</div>
<div class="t" style="left:801.10px;top:173.75px;font-size:16.6px;line-height:16.6px;color:#656565;font-weight:400;transform:scaleX(0.9038);">Item Details</div>
<div class="t" style="left:951.70px;top:173.75px;font-size:16.6px;line-height:16.6px;color:#656565;font-weight:400;transform:scaleX(0.8922);">Costing Details</div>
<div class="t" style="left:1114.61px;top:173.75px;font-size:16.6px;line-height:16.6px;color:#656565;font-weight:400;transform:scaleX(0.8859);">Pricing Details</div>
<div class="t" style="left:1291.17px;top:173.75px;font-size:16.6px;line-height:16.6px;color:#656565;font-weight:400;transform:scaleX(0.8332);">Issue Link</div>
<div class="t" style="left:827.12px;top:230.56px;font-size:16.7px;line-height:16.7px;color:#656565;font-weight:400;transform:scaleX(0.8776);">Main Details</div>
<div class="t" style="left:958.10px;top:230.56px;font-size:16.7px;line-height:16.7px;color:#656565;font-weight:400;transform:scaleX(0.8961);">Delivery Instruction</div>
<div class="t" style="left:1135.88px;top:230.56px;font-size:16.7px;line-height:16.7px;color:#656565;font-weight:400;transform:scaleX(0.9197);">Department</div>
<div class="t" style="left:1303.17px;top:230.56px;font-size:16.7px;line-height:16.7px;color:#656565;font-weight:400;transform:scaleX(0.8253);">Doc Link</div>
<div class="t" style="left:893.70px;top:286.76px;font-size:16.7px;line-height:16.7px;color:#656565;font-weight:400;transform:scaleX(0.8865);">Copied From</div>
<div class="t" style="left:1194.60px;top:286.76px;font-size:16.7px;line-height:16.7px;color:#1a1a1a;font-weight:400;transform:scaleX(0.8870);">Copied To</div>
<div class="t" style="left:1147.50px;top:336.43px;font-size:11.3px;line-height:11.3px;color:#9a9a9a;font-weight:400;transform:scaleX(0.8147);">Rows</div>
<div class="t" style="left:1146.86px;top:354.28px;font-size:15.5px;line-height:15.5px;color:#222;font-weight:400;transform:scaleX(0.6438);">10</div>
<div class="t" style="left:1242.44px;top:358.58px;font-size:15.5px;line-height:15.5px;color:#222;font-weight:400;transform:scaleX(0.9586);">page</div>
<div class="t" style="left:1290.40px;top:358.58px;font-size:15.5px;line-height:15.5px;color:#222;font-weight:400;transform:scaleX(0.7856);">of</div>
<div class="t" style="left:772.12px;top:396.60px;font-size:15px;line-height:15px;color:#666;font-weight:400;transform:scaleX(0.7786);">Doc No</div>
<div class="t" style="left:959.75px;top:396.60px;font-size:15px;line-height:15px;color:#666;font-weight:400;transform:scaleX(0.7513);">Branch</div>
<div class="t" style="left:1147.90px;top:396.60px;font-size:15px;line-height:15px;color:#666;font-weight:400;transform:scaleX(0.7390);">Server Doc Type</div>
<div class="t" style="left:1335.60px;top:396.60px;font-size:15px;line-height:15px;color:#666;font-weight:400;transform:scaleX(0.7329);">Status</div>
<div class="t" style="left:743.20px;top:241.70px;font-size:13px;line-height:13px;color:#222;transform-origin:0 0;transform:scaleX(0.72) rotate(90deg) scaleX(1.0097) translate(0.00px,-6.58px)">Columns</div>
<div class="t" style="left:743.20px;top:338.80px;font-size:13px;line-height:13px;color:#222;transform-origin:0 0;transform:scaleX(0.72) rotate(90deg) scaleX(1.0118) translate(-1.00px,-6.58px)">Filters</div>
<div class="t" style="left:1392.30px;top:436.60px;font-size:13px;line-height:13px;color:#222;transform-origin:0 0;transform:scaleX(0.72) rotate(90deg) scaleX(1.0117) translate(0.00px,-6.58px)">Columns</div>
<div class="t" style="left:1392.30px;top:535.00px;font-size:13px;line-height:13px;color:#222;transform-origin:0 0;transform:scaleX(0.72) rotate(90deg) scaleX(1.0032) translate(-1.00px,-6.58px)">Filters</div>
</body></html>
